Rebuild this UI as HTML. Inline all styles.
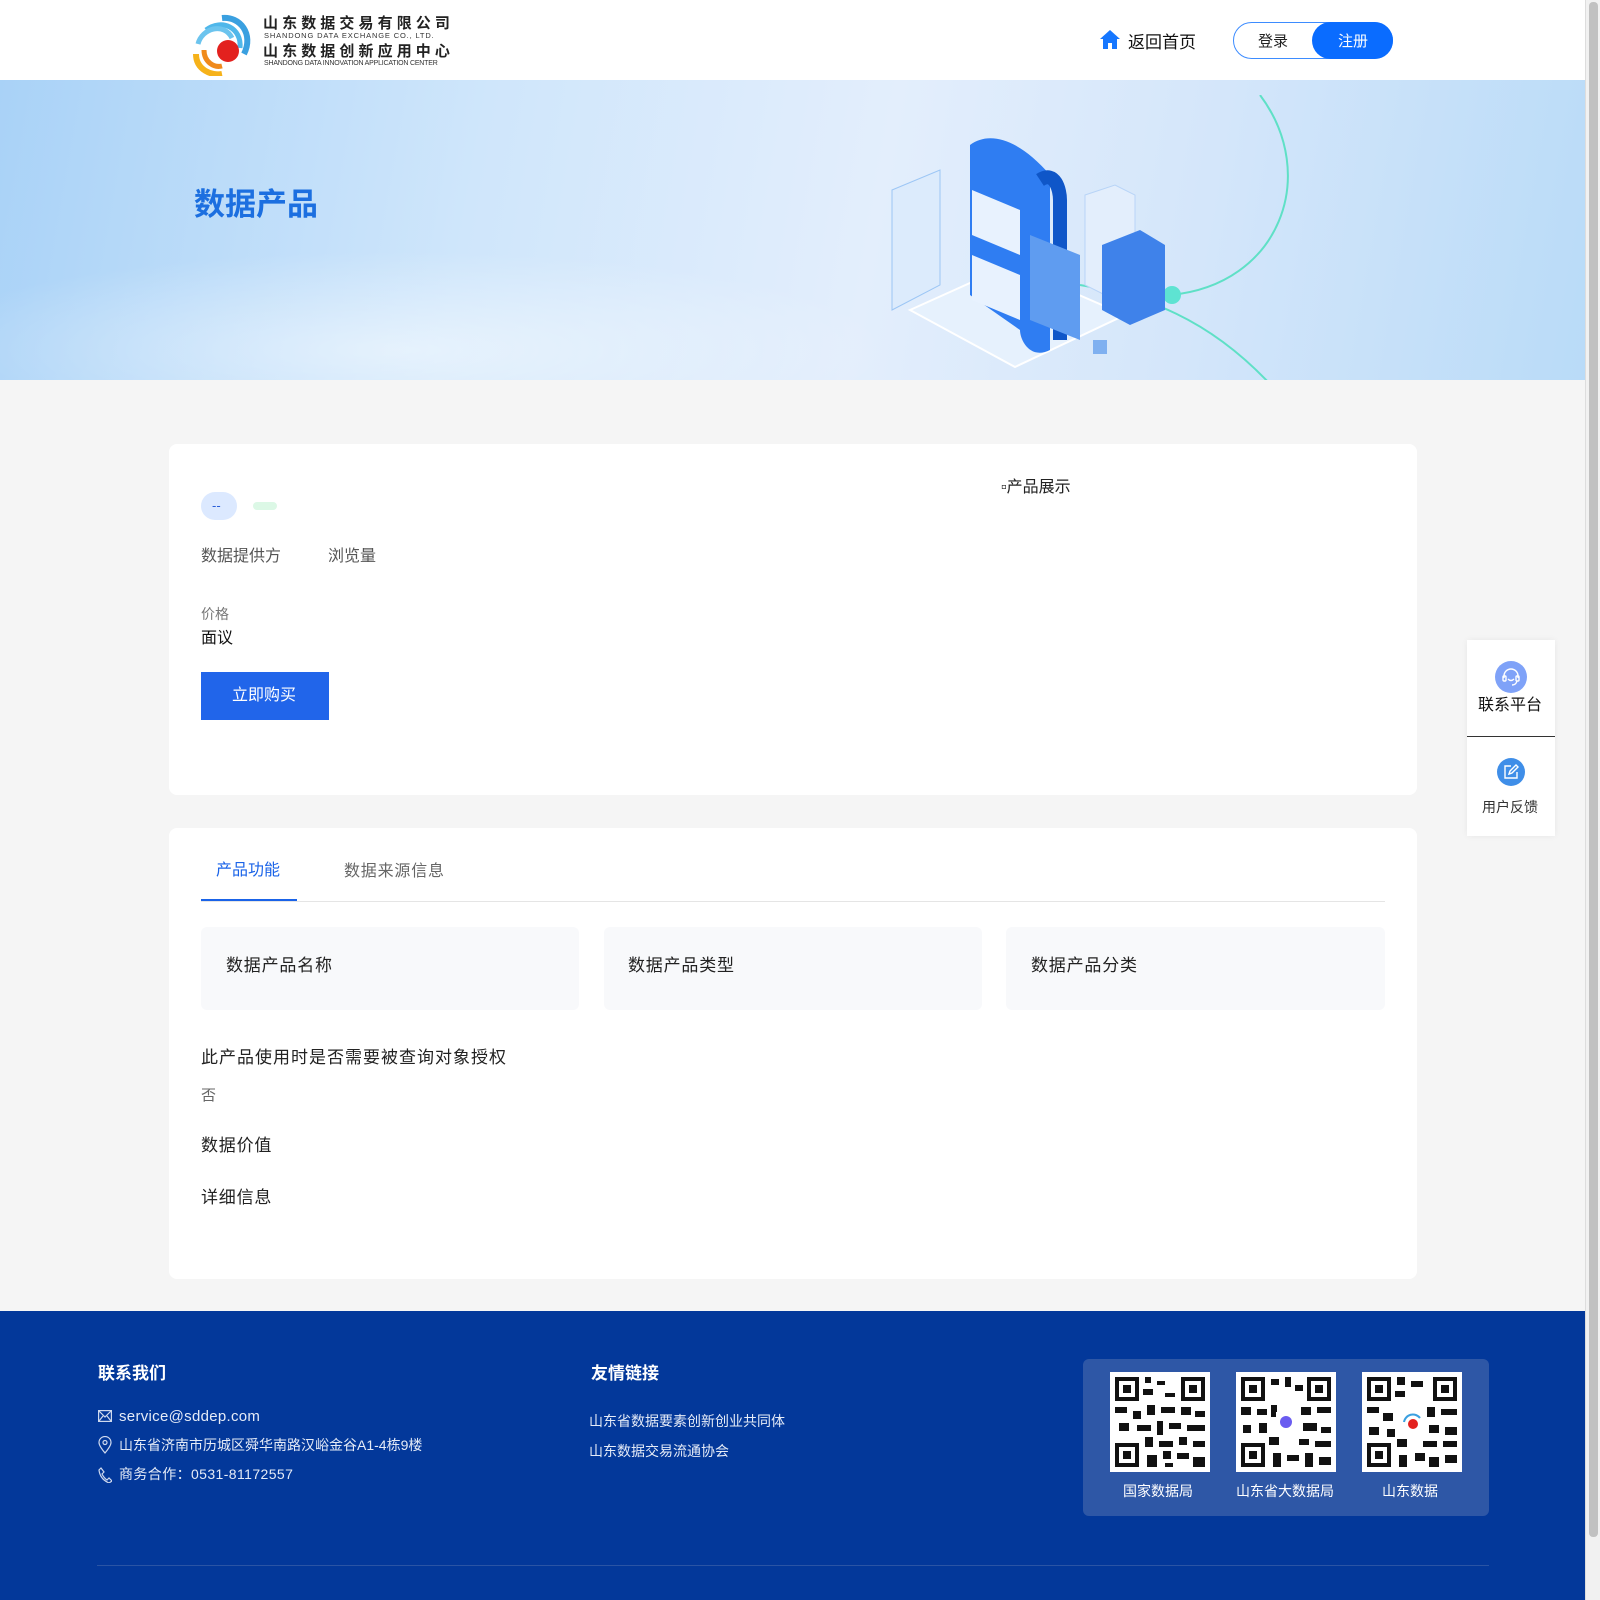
<!DOCTYPE html>
<html><head><meta charset="utf-8"><style>
*{margin:0;padding:0;box-sizing:border-box}
body{width:1600px;height:1600px;overflow:hidden;background:#f5f5f5;font-family:"Liberation Sans","Noto Sans CJK SC",sans-serif;position:relative}
.wrap{position:absolute;left:0;top:0;width:1585px;height:1600px}
.sb{position:absolute;right:0;top:0;width:15px;height:1600px;background:#f1f1f1;border-left:1px solid #ddd}
.sb i{position:absolute;left:3px;top:2px;width:9px;height:1535px;background:#c1c1c1;border-radius:4px}
.hdr{position:absolute;left:0;top:0;width:1585px;height:80px;background:#fff}
.ban{position:absolute;left:0;top:80px;width:1585px;height:300px;background:linear-gradient(100deg,#a9d2f7 0%,#cfe6fb 30%,#e3eefc 55%,#d4e6fa 75%,#b9dbf8 100%);overflow:hidden}
.card{position:absolute;left:169px;width:1248px;background:#fff;border-radius:8px}
.t{position:absolute;white-space:nowrap;line-height:1.5;transform:translateY(4px)}
.lg{transform:none}
.ls{letter-spacing:0.8px}
.foot{position:absolute;left:0;top:1311px;width:1585px;height:289px;background:#03389a}
</style></head><body><div class="wrap">
<div class="hdr">
 <svg style="position:absolute;left:192px;top:14px" width="62" height="62" viewBox="0 0 62 62">
  <path d="M30 4 C48 2 62 20 52 40" stroke="#3aa0e0" stroke-width="6" fill="none"/>
  <path d="M14 16 C30 4 50 14 48 34" stroke="#4fb7ea" stroke-width="5" fill="none"/>
  <path d="M6 30 C10 14 32 8 40 24" stroke="#6cc4ee" stroke-width="5" fill="none"/>
  <path d="M4 40 C4 56 20 62 30 60" stroke="#f6b21a" stroke-width="6" fill="none"/>
  <path d="M12 36 C12 48 22 54 30 52" stroke="#f08a1c" stroke-width="5" fill="none"/>
  <circle cx="36" cy="37" r="11" fill="#e3211e"/>
 </svg>
 <div class="t lg" style="left:263px;top:16px;font-size:15px;line-height:1;font-weight:bold;letter-spacing:4.1px;color:#222">山东数据交易有限公司</div>
 <div class="t lg" style="left:264px;top:32px;font-size:7.5px;line-height:1;letter-spacing:0.85px;color:#333">SHANDONG DATA EXCHANGE CO., LTD.</div>
 <div class="t lg" style="left:263px;top:44px;font-size:15px;line-height:1;font-weight:bold;letter-spacing:4.1px;color:#222">山东数据创新应用中心</div>
 <div class="t lg" style="left:264px;top:60px;font-size:7px;line-height:1;letter-spacing:-0.2px;color:#333">SHANDONG DATA INNOVATION APPLICATION CENTER</div>
 <svg style="position:absolute;left:1099px;top:29px" width="22" height="21" viewBox="0 0 22 21"><path d="M11 1 L21 10 H18 V20 H13 V14 H9 V20 H4 V10 H1 Z" fill="#1677ff"/></svg>
 <div class="t" style="left:1128px;top:26px;font-size:17px;color:#111">返回首页</div>
 <div style="position:absolute;left:1233px;top:22px;width:160px;height:37px;border:1px solid #3d8cff;border-radius:19px"></div>
 <div style="position:absolute;left:1312px;top:22px;width:81px;height:37px;background:#0a6cff;border-radius:19px"></div>
 <div class="t" style="left:1258px;top:27px;font-size:15px;color:#222">登录</div>
 <div class="t" style="left:1338px;top:27px;font-size:15px;color:#fff">注册</div>
</div>
<div class="ban">
 <div style="position:absolute;left:-100px;top:170px;width:1000px;height:200px;border-radius:50%;background:radial-gradient(ellipse,rgba(255,255,255,.5),transparent 70%)"></div>
 <div class="t" style="left:194px;top:98px;font-size:31px;font-weight:bold;color:#1c6fe0">数据产品</div>
 <svg style="position:absolute;left:880px;top:15px" width="420" height="285" viewBox="0 0 420 285">
  <path d="M380 0 C440 80 400 190 290 200" stroke="#5fe0c6" stroke-width="2" fill="none"/>
  <path d="M200 190 C260 200 330 220 400 300" stroke="#5fe0c6" stroke-width="2" fill="none"/>
  <circle cx="292" cy="200" r="9" fill="#5ee3d2"/>
  <path d="M30 215 L130 170 L245 220 L135 272 Z" fill="#e6f1fd" stroke="#fff" stroke-width="2"/>
  <path d="M12 95 L60 75 V190 L12 215 Z" fill="#dcebfc" stroke="#9cc6f5"/>
  <path d="M90 50 C110 35 140 45 170 80 V255 C150 265 140 245 140 235 L90 200 Z" fill="#2f7df2"/>
  <path d="M160 85 C175 75 180 95 180 105 V245" stroke="#0f56c8" stroke-width="14" fill="none"/>
  <path d="M92 95 L140 115 V160 L92 140 Z" fill="#e8f2fe"/>
  <path d="M92 160 L140 180 V225 L92 205 Z" fill="#e8f2fe"/>
  <path d="M150 140 L200 160 V245 L150 225 Z" fill="#5f9cf0"/>
  <path d="M205 100 L235 90 L255 100 V190 L225 200 L205 190 Z" fill="#e3eefc" stroke="#b8d4f7"/>
  <path d="M222 150 L260 135 L285 150 V215 L250 230 L222 215 Z" fill="#3f82ea"/>
  <rect x="213" y="245" width="14" height="14" fill="#7fb0f0"/>
 </svg>
</div>
<div class="card" style="top:444px;height:351px">
 <div style="position:absolute;left:32px;top:48px;width:36px;height:28px;border-radius:14px;background:#dce9ff"></div>
 <div class="t" style="left:43px;top:48px;font-size:13px;color:#2b5fd9">--</div>
 <div style="position:absolute;left:84px;top:58px;width:24px;height:8px;border-radius:4px;background:#dcf8e6"></div>
 <div class="t" style="left:32px;top:97px;font-size:16px;color:#555">数据提供方</div>
 <div class="t" style="left:159px;top:97px;font-size:16px;color:#555">浏览量</div>
 <div class="t" style="left:32px;top:156px;font-size:14px;color:#777">价格</div>
 <div class="t" style="left:32px;top:179px;font-size:16px;color:#111">面议</div>
 <div style="position:absolute;left:32px;top:228px;width:128px;height:48px;background:#2165ea"></div>
 <div class="t" style="left:63px;top:236px;font-size:16px;color:#fff">立即购买</div>
 <div class="t" style="left:832px;top:28px;font-size:16px;color:#222">▫产品展示</div>
</div>
<div class="card" style="top:828px;height:451px">
 <div class="t" style="left:47px;top:27px;font-size:16px;color:#1a63e8">产品功能</div>
 <div style="position:absolute;left:32px;top:71px;width:96px;height:2px;background:#1a63e8"></div>
 <div class="t ls" style="left:175px;top:28px;font-size:16px;color:#666">数据来源信息</div>
 <div style="position:absolute;left:32px;top:73px;width:1184px;height:1px;background:#e5e5e5"></div>
 <div style="position:absolute;left:32px;top:99px;width:378px;height:83px;background:#f8f9fb;border-radius:6px"></div>
 <div style="position:absolute;left:435px;top:99px;width:378px;height:83px;background:#f8f9fb;border-radius:6px"></div>
 <div style="position:absolute;left:837px;top:99px;width:379px;height:83px;background:#f8f9fb;border-radius:6px"></div>
 <div class="t ls" style="left:57px;top:121px;font-size:17px;color:#222">数据产品名称</div>
 <div class="t ls" style="left:459px;top:121px;font-size:17px;color:#222">数据产品类型</div>
 <div class="t ls" style="left:862px;top:121px;font-size:17px;color:#222">数据产品分类</div>
 <div class="t" style="left:32px;top:213px;font-size:17px;letter-spacing:1px;color:#222">此产品使用时是否需要被查询对象授权</div>
 <div class="t" style="left:32px;top:253px;font-size:15px;color:#666">否</div>
 <div class="t ls" style="left:32px;top:301px;font-size:17px;color:#222">数据价值</div>
 <div class="t ls" style="left:32px;top:353px;font-size:17px;color:#222">详细信息</div>
</div>
<div style="position:absolute;left:1467px;top:640px;width:88px;height:196px;background:#fff;box-shadow:0 0 6px rgba(0,0,0,.06)"></div>
<div style="position:absolute;left:1467px;top:736px;width:88px;height:1px;background:#333"></div>
<div style="position:absolute;left:1495px;top:661px;width:32px;height:32px;border-radius:50%;background:#7fa2f8"></div>
<svg style="position:absolute;left:1499px;top:665px" width="24" height="24" viewBox="0 0 24 24" fill="none" stroke="#fff" stroke-width="1.4"><path d="M5 13 V11 A7 7 0 0 1 19 11 V13"/><rect x="4" y="11" width="3" height="5" rx="1"/><rect x="17" y="11" width="3" height="5" rx="1"/><path d="M9 14 Q12 17 15 14"/><path d="M18 16 Q17 20 13 20"/></svg>
<div class="t" style="left:1478px;top:690px;font-size:16px;color:#111">联系平台</div>
<div style="position:absolute;left:1497px;top:758px;width:28px;height:28px;border-radius:50%;background:#3f8ee8"></div>
<svg style="position:absolute;left:1501px;top:762px" width="20" height="20" viewBox="0 0 20 20" fill="none" stroke="#fff" stroke-width="1.4"><path d="M10 4 H4 V16 H16 V10"/><path d="M8 12 L9 9 L15 3 L17 5 L11 11 Z"/></svg>
<div class="t" style="left:1482px;top:793px;font-size:14px;color:#333">用户反馈</div>
<div class="foot">
 <div class="t" style="left:98px;top:46px;font-size:17px;font-weight:bold;color:#fff">联系我们</div>
 <svg style="position:absolute;left:98px;top:99px" width="14" height="12" viewBox="0 0 14 12" fill="none" stroke="#cfd9ee" stroke-width="1.2"><rect x=".6" y=".6" width="12.8" height="10.8"/><path d="M1 1 L7 7 L13 1 M1 11 L5 6 M13 11 L9 6"/></svg>
 <div class="t" style="left:119px;top:91px;font-size:15px;letter-spacing:0.3px;color:#e5ebf7">service@sddep.com</div>
 <svg style="position:absolute;left:98px;top:125px" width="14" height="18" viewBox="0 0 14 18" fill="none" stroke="#cfd9ee" stroke-width="1.2"><path d="M7 17 C2 11 1 8 1 6.5 A6 6 0 0 1 13 6.5 C13 8 12 11 7 17 Z"/><circle cx="7" cy="6.5" r="2"/></svg>
 <div class="t" style="left:119px;top:120px;font-size:14px;color:#e5ebf7">山东省济南市历城区舜华南路汉峪金谷A1-4栋9楼</div>
 <svg style="position:absolute;left:98px;top:156px" width="14" height="16" viewBox="0 0 14 16" fill="none" stroke="#cfd9ee" stroke-width="1.2"><path d="M3 1 L6 5 L4 7 Q6 11 9 13 L11 11 L14 14 L11 16 Q2 12 1 3 Z"/></svg>
 <div class="t" style="left:119px;top:149px;font-size:14px;letter-spacing:0.4px;color:#e5ebf7">商务合作：0531-81172557</div>
 <div class="t" style="left:591px;top:46px;font-size:17px;font-weight:bold;color:#fff">友情链接</div>
 <div class="t" style="left:589px;top:96px;font-size:14px;color:#e5ebf7">山东省数据要素创新创业共同体</div>
 <div class="t" style="left:589px;top:126px;font-size:14px;color:#e5ebf7">山东数据交易流通协会</div>
 <div style="position:absolute;left:1083px;top:48px;width:406px;height:157px;background:#2e57a6;border-radius:6px"></div>
 <div class="t" style="left:1123px;top:166px;font-size:14px;color:#fff">国家数据局</div>
 <div class="t" style="left:1236px;top:166px;font-size:14px;color:#fff">山东省大数据局</div>
 <div class="t" style="left:1382px;top:166px;font-size:14px;color:#fff">山东数据</div>
 <div style="position:absolute;left:97px;top:254px;width:1392px;height:1px;background:#2a54a4"></div>
</div>
<svg style="position:absolute;left:1110px;top:1372px" width="100" height="100"><rect width="100" height="100" fill="#fff"/><g fill="#111"><rect x="5" y="5" width="24" height="24"/><rect x="71" y="5" width="24" height="24"/><rect x="5" y="71" width="24" height="24"/></g><g fill="#fff"><rect x="9" y="9" width="16" height="16"/><rect x="75" y="9" width="16" height="16"/><rect x="9" y="75" width="16" height="16"/></g><g fill="#111"><rect x="13" y="13" width="8" height="8"/><rect x="79" y="13" width="8" height="8"/><rect x="13" y="79" width="8" height="8"/><path d="M35 5h6v6h-6zM47 9h8v4h-8zM33 17h10v6h-10zM55 21h10v4h-10zM5 35h12v6h-12zM23 39h8v8h-8zM37 33h8v10h-8zM51 35h14v6h-14zM71 35h10v8h-10zM85 39h10v6h-10zM9 51h10v8h-10zM27 53h14v6h-14zM47 49h6v14h-6zM59 51h12v6h-12zM77 53h18v6h-18zM35 65h8v10h-8zM49 69h14v6h-14zM69 65h8v8h-8zM83 69h12v6h-12zM37 83h10v12h-10zM53 79h8v8h-8zM67 81h12v6h-12zM83 85h12v10h-12zM55 91h8v4h-8z"/></g></svg>
<svg style="position:absolute;left:1236px;top:1372px" width="100" height="100"><rect width="100" height="100" fill="#fff"/><g fill="#111"><rect x="5" y="5" width="24" height="24"/><rect x="71" y="5" width="24" height="24"/><rect x="5" y="71" width="24" height="24"/></g><g fill="#fff"><rect x="9" y="9" width="16" height="16"/><rect x="75" y="9" width="16" height="16"/><rect x="9" y="75" width="16" height="16"/></g><g fill="#111"><rect x="13" y="13" width="8" height="8"/><rect x="79" y="13" width="8" height="8"/><rect x="13" y="79" width="8" height="8"/><path d="M35 7h8v6h-8zM49 5h6v10h-6zM59 13h8v6h-8zM5 35h10v8h-10zM21 37h10v6h-10zM35 33h6v12h-6zM65 35h10v8h-10zM81 35h14v6h-14zM7 53h8v8h-8zM23 51h8v10h-8zM67 51h14v8h-14zM85 55h10v6h-10zM33 65h10v8h-10zM63 67h10v6h-10zM79 69h16v6h-16zM37 81h8v14h-8zM51 83h12v6h-12zM69 81h8v14h-8zM83 85h12v8h-12z"/></g><rect x="40" y="40" width="20" height="20" fill="#fff"/><circle cx="50" cy="50" r="6" fill="#6a5cf0"/></svg>
<svg style="position:absolute;left:1362px;top:1372px" width="100" height="100"><rect width="100" height="100" fill="#fff"/><g fill="#111"><rect x="5" y="5" width="24" height="24"/><rect x="71" y="5" width="24" height="24"/><rect x="5" y="71" width="24" height="24"/></g><g fill="#fff"><rect x="9" y="9" width="16" height="16"/><rect x="75" y="9" width="16" height="16"/><rect x="9" y="75" width="16" height="16"/></g><g fill="#111"><rect x="13" y="13" width="8" height="8"/><rect x="79" y="13" width="8" height="8"/><rect x="13" y="79" width="8" height="8"/><path d="M35 5h8v8h-8zM49 9h12v6h-12zM33 19h10v6h-10zM5 35h12v6h-12zM21 41h10v8h-10zM65 35h8v10h-8zM79 37h16v6h-16zM7 55h10v8h-10zM25 57h8v8h-8zM67 53h10v8h-10zM83 55h12v8h-12zM35 67h10v8h-10zM61 69h14v6h-14zM81 69h14v6h-14zM37 83h8v12h-8zM53 81h10v8h-10zM67 85h10v10h-10zM83 83h12v8h-12z"/></g><rect x="38" y="38" width="24" height="24" fill="#fff" rx="3"/><circle cx="51" cy="52" r="5" fill="#e3211e"/><path d="M42 50 A9 9 0 0 1 58 46" stroke="#3aa0e0" stroke-width="2" fill="none"/></svg>
</div><div class="sb"><i></i></div></body></html>
